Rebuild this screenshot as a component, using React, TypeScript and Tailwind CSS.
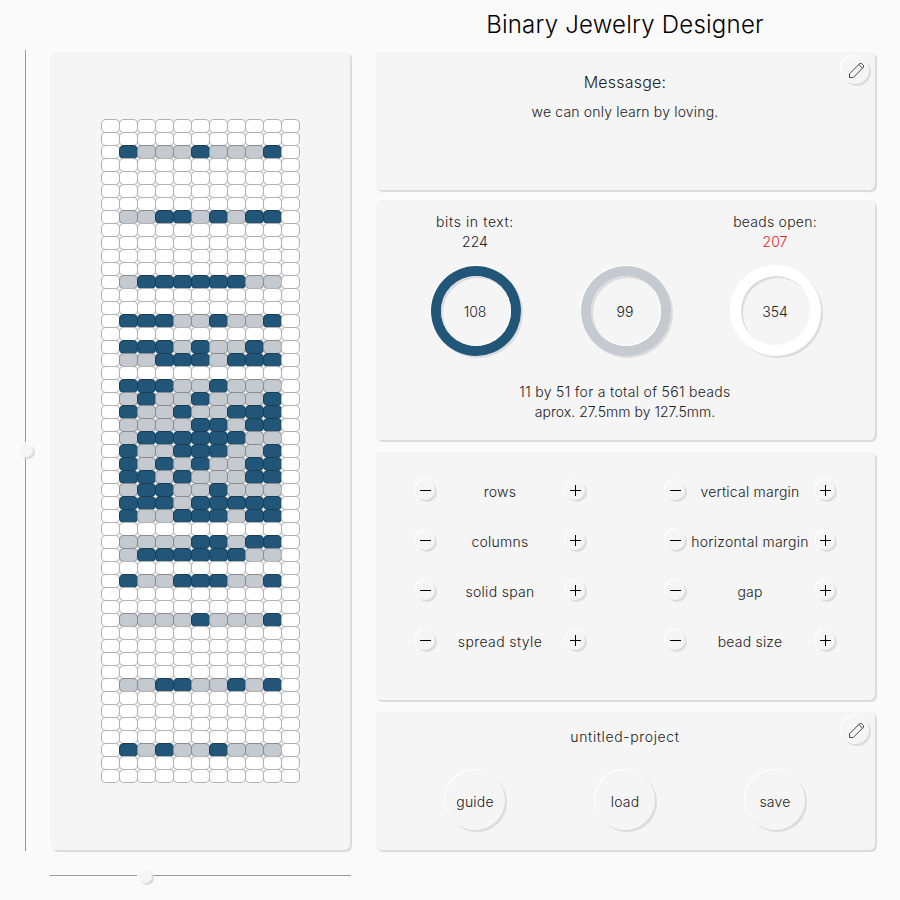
import React from "react";

const ROWS = 51;
const COLS = 11;

const BITS: Record<number, string> = {
  2: "100010001",
  7: "001101011",
  12: "011111100",
  15: "111001001",
  17: "111010010",
  18: "001110111",
  20: "111001000",
  21: "010010001",
  22: "100100111",
  23: "000011011",
  24: "011111100",
  25: "100111001",
  26: "101010011",
  27: "110100011",
  28: "011001000",
  29: "111011111",
  30: "100111011",
  32: "000011011",
  33: "011111100",
  35: "100111001",
  38: "000010001",
  43: "001100101",
  48: "101001000",
};

const raised = "shadow-[2px_2px_0_#dcdcdc,-1px_-1px_0_#ffffff]";
const panel = `rounded-[6px] bg-[#f5f5f5] ${raised}`;

function beadColor(row: number, col: number) {
  const bits = BITS[row];
  if (!bits || col === 0 || col === COLS - 1) return "bg-white";
  return bits[col - 1] === "1" ? "bg-[#225678]" : "bg-[#c5c9d0]";
}

function Beads() {
  return (
    <div className="grid w-[198px] grid-cols-[repeat(11,18px)] auto-rows-[13px]">
      {Array.from({ length: ROWS * COLS }, (_, i) => (
        <div
          key={i}
          className={`h-[14px] w-[19px] rounded-[5px] border border-black/30 ${beadColor(Math.floor(i / COLS), i % COLS)}`}
        />
      ))}
    </div>
  );
}

function Label({ children, className = "" }: { children: React.ReactNode; className?: string }) {
  return <span className={`whitespace-nowrap ${className}`}>{children}</span>;
}

function Pencil() {
  return (
    <button className={`absolute right-[6px] top-[5px] flex size-[28px] items-center justify-center rounded-full bg-[#f5f5f5] pl-[3px] ${raised}`}>
      <svg width="17" height="17" viewBox="0 0 17 17" fill="none" stroke="#333" strokeWidth="0.9">
        <path d="M1.5 15.5V11.8L11.8 1.5H13.4L15.5 3.6V5.2L5.2 15.5Z M10.8 2.5L14.5 6.2" />
      </svg>
    </button>
  );
}

function RoundButton({ plus = false }: { plus?: boolean }) {
  return (
    <button className={`flex size-[20px] items-start justify-start rounded-full bg-[#f5f5f5] pl-[5px] pt-[5px] ${raised}`}>
      <svg width="11" height="11" viewBox="0 0 11 11" stroke="#000" strokeWidth="1" shapeRendering="crispEdges">
        <path d={plus ? "M0 5.5H11M5.5 0V11" : "M0 5.5H11"} />
      </svg>
    </button>
  );
}

function Control({ label, spacing }: { label: string; spacing: string }) {
  return (
    <div className="flex h-[50px] items-center justify-between">
      <RoundButton />
      <Label className={`pt-[3px] ${spacing}`}>{label}</Label>
      <RoundButton plus />
    </div>
  );
}

function Ring({ value, color }: { value: string; color: string }) {
  return (
    <div className={`flex size-[90px] items-center justify-center rounded-full ${color} ${raised}`}>
      <div className="flex size-[70px] items-center justify-center rounded-full bg-[#f5f5f5] pr-[2px] pt-[2px] shadow-[inset_2px_2px_0_#dcdcdc,inset_-1px_-1px_0_#ffffff]">
        {value}
      </div>
    </div>
  );
}

export default function App() {
  return (
    <div className="flex h-[900px] w-[900px] overflow-hidden bg-[#fafafa] font-['Inter',sans-serif] text-[14px] font-light leading-[20px] text-[#222]">
      <div className="w-[50px] pl-[25px] pt-[50px]">
        <div className="flex h-[801px] w-px flex-col items-center bg-[#999]">
          <div className={`mt-[393px] size-[14px] shrink-0 rounded-full bg-[#f5f5f5] ${raised}`} />
        </div>
      </div>

      <div className="flex w-[300px] flex-col pt-[51px]">
        <div className={`flex h-[799px] flex-col items-start pl-[51px] pt-[68px] ${panel}`}>
          <Beads />
        </div>
        <div className="mt-[25px] flex h-px w-[301px] items-center bg-[#999]">
          <div className={`ml-[88px] size-[14px] shrink-0 rounded-full bg-[#f5f5f5] ${raised}`} />
        </div>
      </div>

      <div className="ml-[25px] flex w-[500px] flex-col">
        <h1 className="h-[51px] pt-[9px] text-center text-[24px] leading-[32px] tracking-[0.22px] text-black">Binary Jewelry Designer</h1>

        <section className={`relative flex h-[139px] flex-col items-center pt-[21px] ${panel}`}>
          <Pencil />
          <Label className="text-[16px] tracking-[0.2px]">Messasge:</Label>
          <Label className="mt-[10px] tracking-[0.17px]">we can only learn by loving.</Label>
        </section>

        <section className={`mt-[10px] flex h-[240px] flex-col px-[25px] pt-[12px] ${panel}`}>
          <div className="grid h-[40px] grid-cols-3 text-center">
            <div>
              <div className="tracking-[0.6px]">bits in text:</div>
              <div>224</div>
            </div>
            <div />
            <div>
              <div className="tracking-[0.25px]">beads open:</div>
              <div className="text-[#ee1c1c]">207</div>
            </div>
          </div>
          <div className="mt-[14px] grid grid-cols-3 justify-items-center pl-[1px] -mr-[1px]">
            <Ring value="108" color="bg-[#225678]" />
            <Ring value="99" color="bg-[#c5c9d0]" />
            <Ring value="354" color="bg-white" />
          </div>
          <div className="mt-[26px] text-center">
            <div className="tracking-[0.32px]">11 by 51 for a total of 561 beads</div>
            <div className="tracking-[0.03px]">aprox. 27.5mm by 127.5mm.</div>
          </div>
        </section>

        <section className={`mt-[11px] grid h-[249px] grid-cols-[170px_170px] content-start gap-x-[80px] pl-[40px] pt-[14px] ${panel}`}>
          <Control label="rows" spacing="tracking-[0.2px]" />
          <Control label="vertical margin" spacing="tracking-[0.22px]" />
          <Control label="columns" spacing="tracking-[0.25px]" />
          <Control label="horizontal margin" spacing="tracking-[0.28px]" />
          <Control label="solid span" spacing="tracking-[0.3px]" />
          <Control label="gap" spacing="tracking-[0.1px]" />
          <Control label="spread style" spacing="tracking-[0.4px]" />
          <Control label="bead size" spacing="tracking-[0.2px]" />
        </section>

        <section className={`relative mt-[11px] flex h-[139px] flex-col pt-[16px] ${panel}`}>
          <Pencil />
          <Label className="text-center tracking-[0.63px]">untitled-project</Label>
          <div className="mt-[23px] grid grid-cols-3 justify-items-center px-[25px]">
            {["guide", "load", "save"].map((name) => (
              <button key={name} className={`size-[60px] rounded-full bg-[#f5f5f5] pt-[4px] tracking-[0.2px] ${raised}`}>{name}</button>
            ))}
          </div>
        </section>
      </div>
    </div>
  );
}
